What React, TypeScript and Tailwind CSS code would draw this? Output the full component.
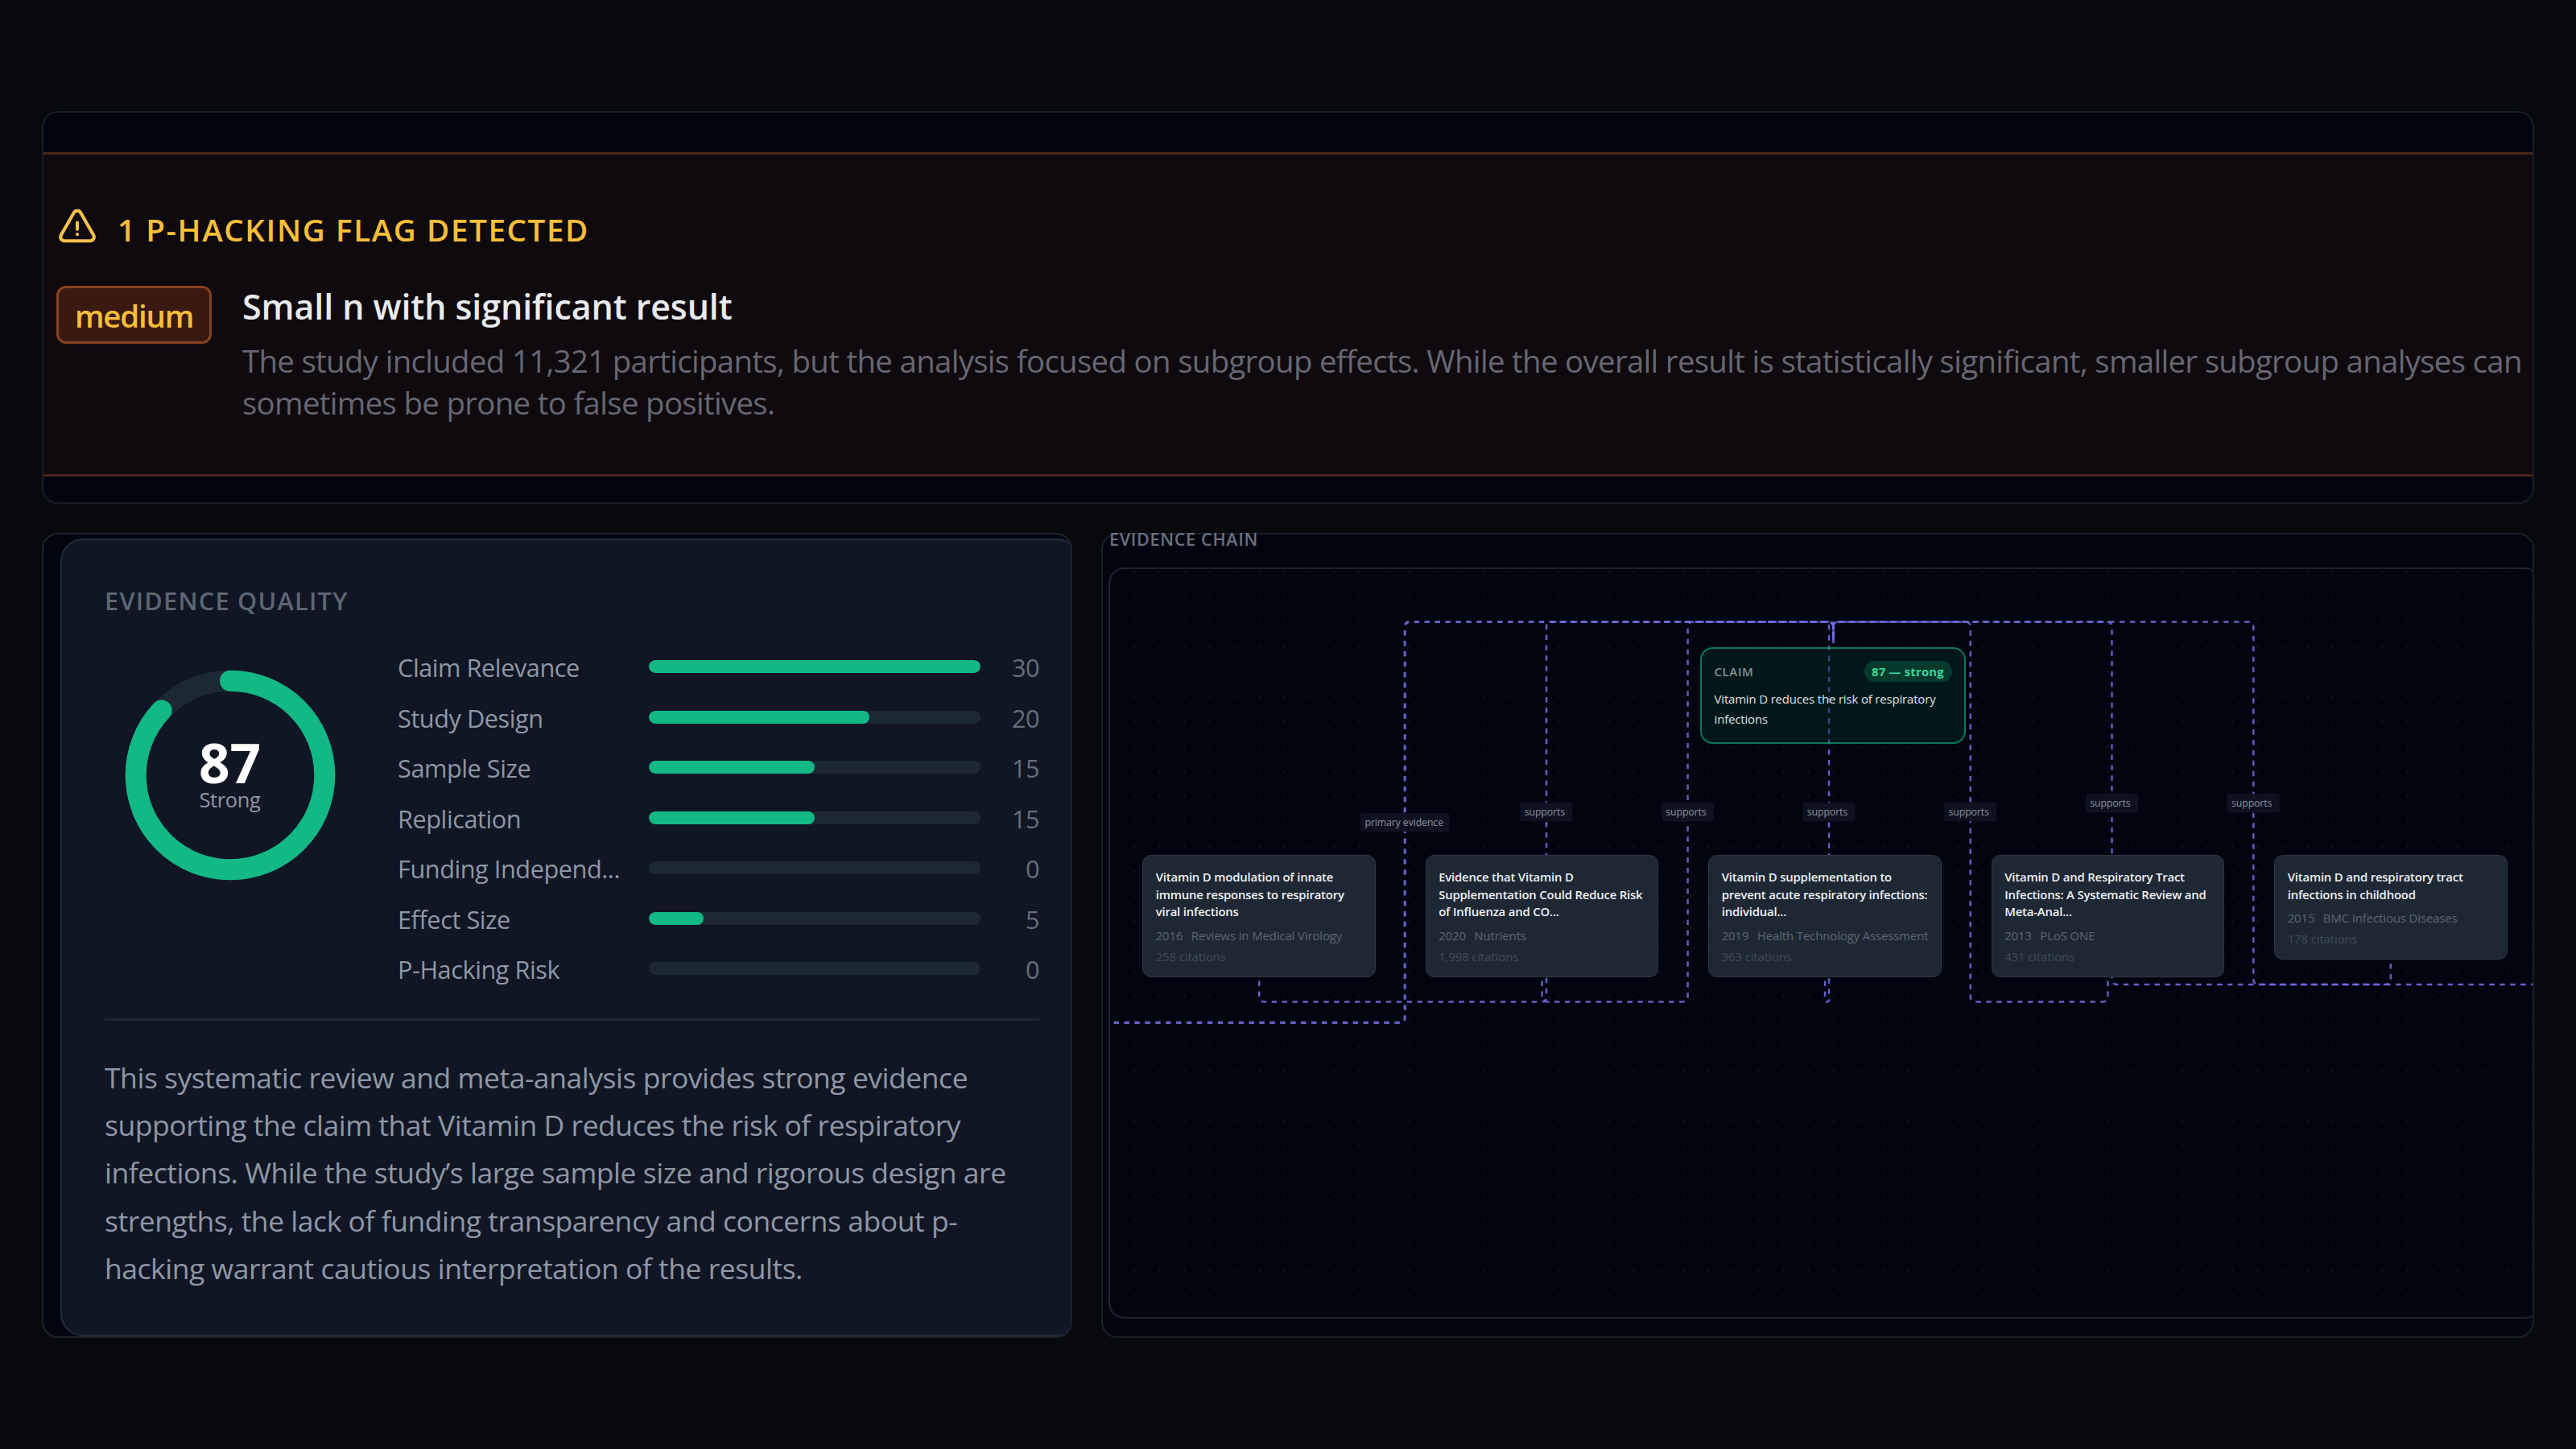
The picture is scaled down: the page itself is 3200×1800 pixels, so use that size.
import React from "react";

type Score = {
  label: string;
  value: number;
  percent: number;
};

type Paper = {
  x: number;
  title: string[];
  year: string;
  journal: string;
  citations: string;
};

type Edge = {
  mid: number;
  from: number;
  bottom: number;
  label: string;
  primary?: boolean;
};

const scores: Score[] = [
  { label: "Claim Relevance", value: 30, percent: 100 },
  { label: "Study Design", value: 20, percent: 66.6 },
  { label: "Sample Size", value: 15, percent: 50 },
  { label: "Replication", value: 15, percent: 50 },
  { label: "Funding Independ...", value: 0, percent: 0 },
  { label: "Effect Size", value: 5, percent: 16.6 },
  { label: "P-Hacking Risk", value: 0, percent: 0 },
];

const summary = [
  "This systematic review and meta-analysis provides strong evidence",
  "supporting the claim that Vitamin D reduces the risk of respiratory",
  "infections. While the study’s large sample size and rigorous design are",
  "strengths, the lack of funding transparency and concerns about p-",
  "hacking warrant cautious interpretation of the results.",
];

const papers: Paper[] = [
  {
    x: 40,
    title: ["Vitamin D modulation of innate", "immune responses to respiratory", "viral infections"],
    year: "2016",
    journal: "Reviews in Medical Virology",
    citations: "258 citations",
  },
  {
    x: 391.5,
    title: ["Evidence that Vitamin D", "Supplementation Could Reduce Risk", "of Influenza and CO..."],
    year: "2020",
    journal: "Nutrients",
    citations: "1,998 citations",
  },
  {
    x: 743,
    title: ["Vitamin D supplementation to", "prevent acute respiratory infections:", "individual..."],
    year: "2019",
    journal: "Health Technology Assessment",
    citations: "363 citations",
  },
  {
    x: 1094.5,
    title: ["Vitamin D and Respiratory Tract", "Infections: A Systematic Review and", "Meta-Anal..."],
    year: "2013",
    journal: "PLoS ONE",
    citations: "431 citations",
  },
  {
    x: 1446,
    title: ["Vitamin D and respiratory tract", "infections in childhood"],
    year: "2015",
    journal: "BMC Infectious Diseases",
    citations: "178 citations",
  },
];

// claim handle position on the canvas
const CLAIM_X = 898.5;
const CLAIM_Y = 91.5;
const TOP_Y = 65.5;

const edges: Edge[] = [
  { from: -166, mid: 366.2, bottom: 563.4, label: "primary evidence", primary: true },
  { from: 185.2, mid: 542, bottom: 537.5, label: "supports" },
  { from: 536.5, mid: 717.6, bottom: 537.5, label: "supports" },
  { from: 888, mid: 893.1, bottom: 537.5, label: "supports" },
  { from: 1239.4, mid: 1068.8, bottom: 537.5, label: "supports" },
  { from: 1590.8, mid: 1244.5, bottom: 516, label: "supports" },
  { from: 1942, mid: 1420.3, bottom: 516, label: "supports" },
];

function edgePath({ from, mid, bottom }: Edge) {
  const a = Math.min(6.5, Math.abs(mid - from) / 2) * Math.sign(mid - from);
  const b = Math.min(6.5, Math.abs(CLAIM_X - mid) / 2) * Math.sign(CLAIM_X - mid);
  const ra = Math.abs(a);
  const rb = Math.abs(b);
  return [
    `M${from} ${bottom - 26}`,
    `L${from} ${bottom - ra}`,
    `Q${from} ${bottom} ${from + a} ${bottom}`,
    `L${mid - a} ${bottom}`,
    `Q${mid} ${bottom} ${mid} ${bottom - ra}`,
    `L${mid} ${TOP_Y + rb}`,
    `Q${mid} ${TOP_Y} ${mid + b} ${TOP_Y}`,
    `L${CLAIM_X - b} ${TOP_Y}`,
    `Q${CLAIM_X} ${TOP_Y} ${CLAIM_X} ${TOP_Y + rb}`,
    `L${CLAIM_X} ${CLAIM_Y}`,
  ].join(" ");
}

function WarningIcon() {
  return (
    <svg
      viewBox="0 0 24 24"
      fill="none"
      stroke="currentColor"
      strokeWidth="1.9"
      strokeLinecap="round"
      strokeLinejoin="round"
      className="mb-[5px] size-[52px] shrink-0 text-[#f8c04a]"
    >
      <path d="M12 9v3.75m-9.303 3.376c-.866 1.5.217 3.374 1.948 3.374h14.71c1.73 0 2.813-1.874 1.948-3.374L13.949 3.378c-.866-1.5-3.032-1.5-3.898 0L2.697 16.126ZM12 15.75h.007v.008H12v-.008Z" />
    </svg>
  );
}

function FlagPanel() {
  return (
    <section className="h-[488px] overflow-hidden rounded-[20px] border-2 border-[#191e24] bg-[#010510]">
      <div className="mt-[49px] h-[403px] border-y-3 border-[#49271b] bg-[#0f0a0d] pt-[67px] pl-[16px]">
        <div className="flex h-[52px] items-center gap-[24px]">
          <WarningIcon />
          <h2 className="text-[38.6px] leading-[52px] font-semibold tracking-[1.6px] whitespace-nowrap text-[#f8bf3a]">
            1 P-HACKING FLAG DETECTED
          </h2>
        </div>
        <div className="mt-[39px] flex items-start">
          <span className="mt-[5px] flex h-[72px] w-[193px] items-center justify-center rounded-[12px] border-3 border-[#864220] bg-[#3a1a10] pt-[3px] text-[38.4px] font-semibold tracking-[-1.2px] text-[#f8bf3a]">
            medium
          </span>
          <div className="ml-[38px] pt-px">
            <h3 className="text-[43px] leading-[60px] font-semibold tracking-[-0.1px] whitespace-nowrap text-[#e8eaee]">
              Small n with significant result
            </h3>
            <p className="mt-[11px] text-[38.4px] leading-[52px] tracking-[-0.68px] whitespace-nowrap text-[#666773]">
              The study included 11,321 participants, but the analysis focused on subgroup effects. While the overall
              result is statistically significant, smaller subgroup analyses can
              <br />
              sometimes be prone to false positives.
            </p>
          </div>
        </div>
      </div>
    </section>
  );
}

function ScoreRing() {
  const r = 117.3;
  const length = 2 * Math.PI * r;
  return (
    <svg width="312" height="312" viewBox="0 0 312 312" className="shrink-0">
      <circle cx="156" cy="156" r={r} fill="none" stroke="#1d2835" strokeWidth="26" />
      <circle
        cx="156"
        cy="156"
        r={r}
        fill="none"
        stroke="#12b985"
        strokeWidth="26"
        strokeLinecap="round"
        strokeDasharray={`${length * 0.87} ${length}`}
        transform="rotate(-90 156 156)"
      />
      <text x="155.5" y="166" textAnchor="middle" fontSize="67.5" fontWeight="700" fill="#ffffff">
        87
      </text>
      <text x="155.5" y="196" textAnchor="middle" fontSize="25.5" fill="#8f97a5" letterSpacing="-0.4">
        Strong
      </text>
    </svg>
  );
}

function QualityPanel() {
  return (
    <section className="h-[1000px] w-[1280px] overflow-hidden rounded-[20px] border-2 border-[#1e232b] bg-[#010510]">
      <div className="mt-[5px] ml-[21px] h-[991px] w-[1266px] rounded-[28px] border-2 border-[#222c39] bg-[#101624] pt-[53px] pl-[53px]">
        <h2 className="text-[30.7px] leading-[44px] font-semibold tracking-[1.25px] text-[#5e6673]">EVIDENCE QUALITY</h2>
        <div className="mt-[39px] flex w-[1161px] gap-[52px]">
          <ScoreRing />
          <ul className="flex-1">
            {scores.map((score) => (
              <li key={score.label} className="mb-[18.5px] flex h-[44px] items-center last:mb-0">
                <span className="w-[312px] text-[30.7px] leading-[44px] tracking-[-0.45px] whitespace-nowrap text-[#8f97a5]">
                  {score.label}
                </span>
                <div className="mb-[2px] h-[16px] w-[412px] overflow-hidden rounded-full bg-[#1d2835]">
                  <div className="h-full rounded-full bg-[#12b985]" style={{ width: `${score.percent}%` }} />
                </div>
                <span className="flex-1 text-right text-[30.7px] leading-[44px] tracking-[-0.5px] text-[#666e7c]">
                  {score.value}
                </span>
              </li>
            ))}
          </ul>
        </div>
        <div className="mt-[39px] h-[3px] w-[1161px] bg-[#1d2835]" />
        <p className="mt-[41px] text-[35.5px] leading-[59.2px] tracking-[-0.47px] whitespace-nowrap text-[#8f97a5]">
          {summary.map((line) => (
            <span key={line} className="block">
              {line}
            </span>
          ))}
        </p>
      </div>
    </section>
  );
}

function ClaimNode() {
  return (
    <div className="absolute top-[96.5px] left-[733px] h-[120px] w-[330px] rounded-[15.5px] border-[2.6px] border-[#10b981]/60 bg-[#052e26]/45 px-[15.5px] pt-[13px]">
      <div className="flex h-[31px] items-center justify-between">
        <span className="text-[15px] font-semibold tracking-[0.6px] text-[#87919c]">CLAIM</span>
        <span className="flex h-[26px] w-[109px] items-center justify-center rounded-full bg-[#063a2c] text-[14.9px] font-bold tracking-[0.2px] whitespace-nowrap text-[#3ad79d]">
          87 — strong
        </span>
      </div>
      <p className="mt-[6px] text-[14.9px] leading-[25.4px] tracking-[-0.13px] whitespace-nowrap text-[#dfe3e8]">
        Vitamin D reduces the risk of respiratory
        <br />
        infections
      </p>
    </div>
  );
}

function PaperNode({ paper }: { paper: Paper }) {
  return (
    <div
      className="absolute top-[355px] w-[289.5px] rounded-[10.5px] border-[1.5px] border-[#2d3743] bg-[#1e2834] px-[15.7px] pt-[16px] pb-[13px]"
      style={{ left: paper.x }}
    >
      <h4 className="text-[14.9px] leading-[21.7px] font-semibold tracking-[-0.19px] whitespace-nowrap text-[#eef0f3]">
        {paper.title.map((line) => (
          <span key={line} className="block">
            {line}
          </span>
        ))}
      </h4>
      <p className="mt-[6px] flex gap-[10.5px] text-[14.9px] leading-[24px] tracking-[-0.1px] whitespace-nowrap text-[#5d6672]">
        <span>{paper.year}</span>
        <span>{paper.journal}</span>
      </p>
      <p className="mt-[2px] text-[14.9px] leading-[24px] tracking-[-0.1px] text-[#404b57]">{paper.citations}</p>
    </div>
  );
}

function ChainPanel() {
  return (
    <section className="h-[1000px] w-[1780px] overflow-x-clip rounded-[20px] border-2 border-[#1b2027] bg-[#010510] pl-[7px]">
      <h2 className="-mt-[9px] ml-px text-[21.5px] leading-[30px] font-semibold tracking-[0.7px] text-[#6a717e]">
        EVIDENCE CHAIN
      </h2>
      <div className="relative mt-[20px] h-[933px] w-[1780px] overflow-hidden rounded-[20px] border-2 border-[#1e2530]">
        <svg width="1776" height="929" className="block">
          <defs>
            <pattern id="dots" x="15" y="-12" width="31" height="31" patternUnits="userSpaceOnUse">
              <circle cx="15.5" cy="15.5" r="1.1" fill="#141a24" />
            </pattern>
          </defs>
          <rect x="15" width="1761" height="929" fill="url(#dots)" />
          <g fill="none" stroke="#716ee0" strokeOpacity="0.88" strokeDasharray="6.46">
            {edges.map((edge) => (
              <path key={edge.mid} d={edgePath(edge)} strokeWidth={edge.primary ? 3.2 : 2.4} />
            ))}
          </g>
          {edges.map((edge) => {
            const w = edge.primary ? 110 : 65;
            const y = (TOP_Y + edge.bottom) / 2;
            return (
              <g key={edge.mid}>
                <rect x={edge.mid - w / 2} y={y - 11.8} width={w} height="23.5" rx="2.5" fill="#0f1422" opacity="0.92" />
                <text x={edge.mid - w / 2 + 5.2} y={y + 4.3} fontSize="12.3" fill="#8b929f" letterSpacing="-0.1">
                  {edge.label}
                </text>
              </g>
            );
          })}
        </svg>
        <ClaimNode />
        {papers.map((paper) => (
          <PaperNode key={paper.x} paper={paper} />
        ))}
      </div>
    </section>
  );
}

export default function App() {
  return (
    <main className="flex h-[1800px] w-[3200px] flex-col gap-[36px] overflow-hidden bg-[#07090c] px-[52px] pt-[138px] font-['Open_Sans','Noto_Sans',sans-serif]">
      <FlagPanel />
      <div className="flex justify-between">
        <QualityPanel />
        <ChainPanel />
      </div>
    </main>
  );
}
